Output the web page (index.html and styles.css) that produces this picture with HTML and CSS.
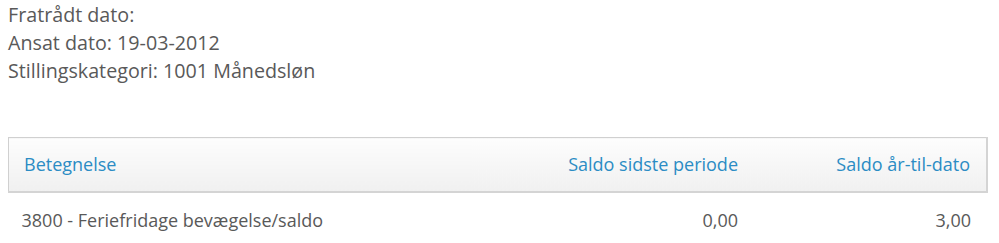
FILE: index.html
```html
<!DOCTYPE html>
<html lang="da">
<head>
    <meta charset="UTF-8">
    <title>Saldi</title>
    <link rel="stylesheet" href="styles.css">
</head>
<body>
    <div class="info">
        <div class="info-line">Fratrådt dato:</div>
        <div class="info-line">Ansat dato: 19-03-2012</div>
        <div class="info-line">Stillingskategori: 1001 Månedsløn</div>
    </div>

    <table class="saldo-table">
        <thead>
            <tr>
                <th class="col-name">Betegnelse</th>
                <th class="num">Saldo sidste periode</th>
                <th class="num col-ytd">Saldo år-til-dato</th>
            </tr>
        </thead>
        <tbody>
            <tr>
                <td class="col-name">3800 - Feriefridage bevægelse/saldo</td>
                <td class="num">0,00</td>
                <td class="num">3,00</td>
            </tr>
        </tbody>
    </table>
</body>
</html>
```

FILE: styles.css
```css
* {
    margin: 0;
    padding: 0;
    box-sizing: border-box;
}

body {
    background: #fff;
    color: #595959;
    font-family: "Open Sans", "Noto Sans", sans-serif;
    padding: 1px 12px 0 8px;
}

.info {
    font-size: 19.7px;
    line-height: 28px;
    margin-bottom: 52px;
}

.saldo-table {
    width: 980px;
    border-collapse: collapse;
    font-size: 18px;
}

.saldo-table th {
    height: 54px;
    font-weight: normal;
    color: #2b8cc4;
    text-align: left;
    padding: 0 16px;
    background: linear-gradient(to bottom, #fdfdfd, #f0f0f0);
    border-top: 1px solid #d0d0d0;
    border-bottom: 2px solid #d4d4d4;
}

.saldo-table th:first-child {
    border-left: 1px solid #d0d0d0;
    padding-left: 15px;
}

.saldo-table th:last-child {
    border-right: 2px solid #d4d4d4;
}

.saldo-table td {
    height: 56px;
    padding: 0 16px;
    color: #595959;
}

.saldo-table td.col-name {
    padding-left: 13px;
}

.saldo-table .num {
    text-align: right;
}

.col-ytd {
    width: 233px;
}
```
